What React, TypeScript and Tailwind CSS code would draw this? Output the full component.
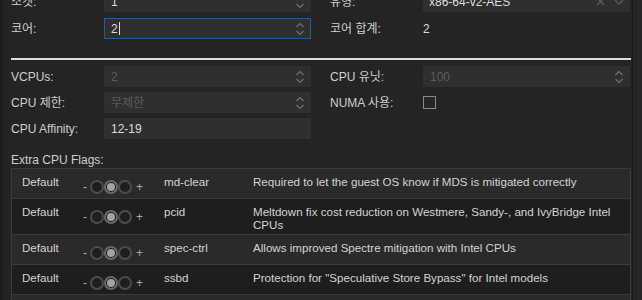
import React from "react";

const font = "font-['Liberation_Sans','Noto_Sans_CJK_KR',sans-serif]";

const flags = [
  { name: "md-clear", desc: "Required to let the guest OS know if MDS is mitigated correctly" },
  { name: "pcid", desc: "Meltdown fix cost reduction on Westmere, Sandy-, and IvyBridge Intel CPUs" },
  { name: "spec-ctrl", desc: "Allows improved Spectre mitigation with Intel CPUs" },
  { name: "ssbd", desc: "Protection for \"Speculative Store Bypass\" for Intel models" },
  { name: "", desc: "" },
];

const Spinner = () => (
  <svg width="10" height="16" viewBox="0 0 10 16" fill="none" stroke="#6f6f6f" strokeWidth="1.2">
    <path d="M1.5 6 L5 2.5 L8.5 6" />
    <path d="M1.5 10 L5 13.5 L8.5 10" />
  </svg>
);

const Field = ({
  label,
  children,
}: {
  label: string;
  children: React.ReactNode;
}) => (
  <div className="flex items-center">
    <div className="w-[93px] shrink-0 text-[12px] text-[#cfcfcf]">{label}</div>
    <div className="w-[207px]">{children}</div>
  </div>
);

const NumberInput = ({
  value,
  disabled,
  focused,
  spinner = true,
}: {
  value: string;
  disabled?: boolean;
  focused?: boolean;
  spinner?: boolean;
}) => (
  <div
    className={`flex h-[21px] items-center justify-between bg-[#2f2f2f] pl-[6px] pr-[5px] text-[12px] ${
      focused ? "border border-[#2a5a95]" : "border border-transparent"
    } ${disabled ? "text-[#5c5c5c]" : "text-[#dcdcdc]"}`}
  >
    <span className="flex items-center">
      {value}
      {focused && <span className="ml-[1px] inline-block h-[13px] w-px bg-[#e0e0e0]" />}
    </span>
    {spinner && <Spinner />}
  </div>
);

const Toggle = () => (
  <div className="flex items-center text-[12px] text-[#a8a8a8]">
    <span className="mr-[3px]">-</span>
    <span className="h-[14px] w-[14px] rounded-full border-2 border-[#4c4c4c] bg-[#1e1e1e]" />
    <span className="flex h-[14px] w-[14px] items-center justify-center rounded-full border-2 border-[#6a6a6a] bg-[#1e1e1e]">
      <span className="h-[8px] w-[8px] rounded-full bg-[#a3a3a3]" />
    </span>
    <span className="h-[14px] w-[14px] rounded-full border-2 border-[#4c4c4c] bg-[#1e1e1e]" />
    <span className="ml-[4px]">+</span>
  </div>
);

export default function App() {
  return (
    <div className={`flex h-[300px] w-[642px] overflow-hidden bg-[#242424] ${font}`}>
      <div className="h-full w-[633px] shrink-0 border-l-[3px] border-r border-l-[#1c1c1c] border-r-[#1a1a1a] pl-[8px] pr-[1px]">
        <div className="-mt-[9px] grid grid-cols-[300px_300px] gap-x-[19px] gap-y-[6px]">
          <Field label="소켓:">
            <NumberInput value="1" />
          </Field>
          <Field label="유형:">
            <div className="flex h-[21px] items-center justify-between bg-[#2f2f2f] pl-[6px] pr-[6px] text-[12px] text-[#dcdcdc]">
              <span>x86-64-v2-AES</span>
              <span className="flex items-center gap-[9px] text-[#5e5e5e]">
                <svg width="9" height="9" viewBox="0 0 9 9" stroke="#5e5e5e" strokeWidth="1.2">
                  <path d="M1 1 L8 8 M8 1 L1 8" />
                </svg>
                <svg width="10" height="6" viewBox="0 0 10 6" fill="none" stroke="#5e5e5e" strokeWidth="1.2">
                  <path d="M1 1 L5 5 L9 1" />
                </svg>
              </span>
            </div>
          </Field>
          <Field label="코어:">
            <NumberInput value="2" focused />
          </Field>
          <Field label="코어 합계:">
            <div className="flex h-[21px] items-center text-[12px] text-[#dcdcdc]">2</div>
          </Field>
        </div>

        <div className="mt-[19px] h-[2px] w-[620px] bg-[#dcdcdc]" />

        <div className="mt-[6px] grid grid-cols-[300px_300px] gap-x-[19px] gap-y-[5px]">
          <Field label="VCPUs:">
            <NumberInput value="2" disabled />
          </Field>
          <Field label="CPU 유닛:">
            <NumberInput value="100" disabled />
          </Field>
          <Field label="CPU 제한:">
            <NumberInput value="무제한" disabled />
          </Field>
          <Field label="NUMA 사용:">
            <div className="flex h-[21px] items-center">
              <span className="h-[13px] w-[13px] border border-[#8a8a8a] bg-[#262626]" />
            </div>
          </Field>
          <Field label="CPU Affinity:">
            <NumberInput value="12-19" spinner={false} />
          </Field>
        </div>

        <div className="mt-[14px] text-[12px] leading-[14px] text-[#cfcfcf]">Extra CPU Flags:</div>

        <div className="mt-[1px] w-[620px] border-l border-r border-t border-[#3b3b3b]">
          {flags.map((f, i) => (
            <div
              key={i}
              className={`grid grid-cols-[61px_81px_89px_1fr] border-b border-[#3b3b3b] pl-[10px] pr-[6px] text-[11.6px] leading-[13px] text-[#d4d4d4] ${
                i % 2 === 0 ? "bg-[#2a2a2a]" : "bg-[#1e1e1e]"
              }`}
            >
              <div className="pt-[6px]">{f.name ? "Default" : ""}</div>
              <div className="pb-[4px] pt-[11px]">{f.name ? <Toggle /> : <div className="h-[14px]" />}</div>
              <div className="pt-[6px]">{f.name}</div>
              <div className="pb-[3px] pt-[6px]">{f.desc}</div>
            </div>
          ))}
        </div>
      </div>
      <div className="h-full flex-1 bg-[#262626]" />
    </div>
  );
}
